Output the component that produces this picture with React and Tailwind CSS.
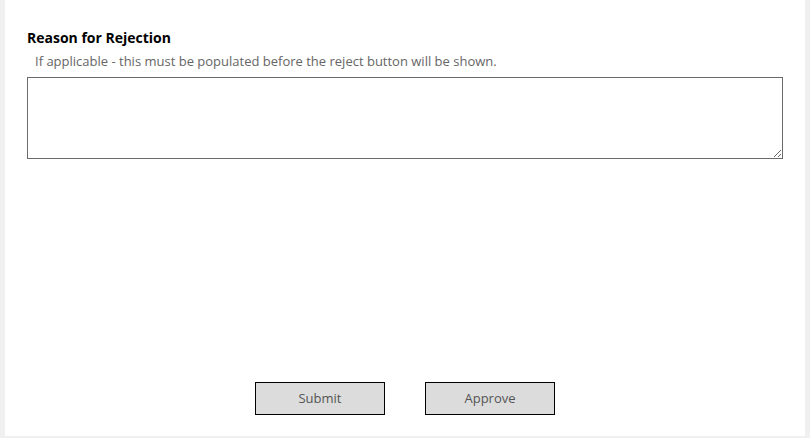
export default function App() {
  return (
    <div className="w-[810px] h-[438px] bg-[#f0f0f0] pl-[5px] pr-[5px]" style={{ fontFamily: '"Open Sans", "Liberation Sans", sans-serif' }}>
      <div className="h-[436px] bg-white flex flex-col px-[22px] pt-[28px] pb-[21px]">
        <h2 className="text-[14px] leading-[20px] font-bold text-black">Reason for Rejection</h2>
        <p className="mt-[4px] pl-[8px] text-[13px] leading-[18px] text-[#666]">
          If applicable - this must be populated before the reject button will be shown.
        </p>
        <textarea className="mt-[7px] w-[756px] h-[82px] border border-[#6b6b6b] bg-white resize-y outline-none" />

        <div className="mt-auto flex justify-center gap-[40px]">
          <button className="w-[130px] h-[33px] bg-[#dcdcdc] border border-black text-[13px] text-[#555]">
            Submit
          </button>
          <button className="w-[130px] h-[33px] bg-[#dcdcdc] border border-black text-[13px] text-[#555]">
            Approve
          </button>
        </div>
      </div>
    </div>
  )
}
